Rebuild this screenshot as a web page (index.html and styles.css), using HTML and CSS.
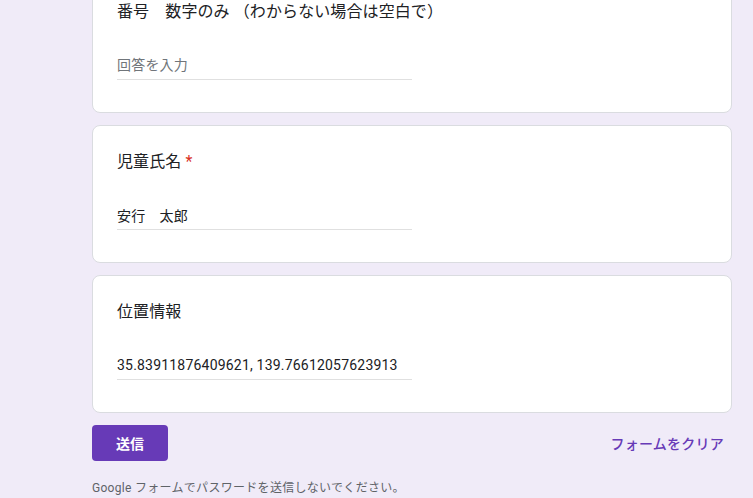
FILE: index.html
```html
<!DOCTYPE html>
<html lang="ja">
<head>
    <meta charset="UTF-8">
    <meta name="viewport" content="width=device-width, initial-scale=1.0">
    <title>フォーム</title>
    <link rel="stylesheet" href="styles.css">
</head>
<body>
    <div class="container">
        <form id="mainForm">
            <div class="card">
                <div class="question-title">番号　数字のみ （わからない場合は空白で）</div>
                <div class="answer">
                    <input type="text" name="number" placeholder="回答を入力">
                </div>
            </div>
            <div class="card">
                <div class="question-title">児童氏名 <span class="required">*</span></div>
                <div class="answer">
                    <input type="text" name="name" value="安行　太郎">
                </div>
            </div>
            <div class="card">
                <div class="question-title">位置情報</div>
                <div class="answer">
                    <input type="text" name="location" value="35.83911876409621, 139.76612057623913">
                </div>
            </div>
            <div class="actions">
                <button type="submit" class="submit-btn">送信</button>
                <button type="reset" class="clear-btn">フォームをクリア</button>
            </div>
        </form>
        <p class="notice">Google フォームでパスワードを送信しないでください。</p>
    </div>
</body>
</html>
```

FILE: styles.css
```css
html, body {
    margin: 0;
    padding: 0;
}
body {
    background-color: #f0ebf8;
    font-family: Roboto, "Noto Sans CJK JP", sans-serif;
    color: #202124;
}
.container {
    width: 640px;
    margin: -25px 0 0 92px;
}
.card {
    background-color: #fff;
    border: 1px solid #dadce0;
    border-radius: 8px;
    padding: 24px 24px 32px;
    margin-bottom: 12px;
}
.question-title {
    font-size: 16px;
    line-height: 24px;
    letter-spacing: 0.1px;
}
.required {
    color: #d93025;
}
.answer {
    margin-top: 24px;
    width: 50%;
}
.answer input {
    display: block;
    width: 100%;
    box-sizing: border-box;
    height: 32px;
    padding: 7px 0 4px;
    border: none;
    border-bottom: 1px solid #e0e0e0;
    font-family: Roboto, "Noto Sans CJK JP", sans-serif;
    font-size: 14px;
    line-height: 20px;
    letter-spacing: 0.2px;
    color: #202124;
    background: transparent;
    outline: none;
}
.answer input::placeholder {
    color: #70757a;
}
.actions {
    display: flex;
    justify-content: space-between;
    align-items: center;
    margin-top: 1px;
}
.submit-btn {
    width: 76px;
    height: 36px;
    background-color: #673ab7;
    color: #fff;
    border: none;
    border-radius: 4px;
    font-family: Roboto, "Noto Sans CJK JP", sans-serif;
    font-size: 14px;
    font-weight: 700;
    cursor: pointer;
}
.clear-btn {
    height: 36px;
    padding: 0 8px;
    background: none;
    border: none;
    color: #673ab7;
    font-family: Roboto, "Noto Sans CJK JP", sans-serif;
    font-size: 14px;
    font-weight: 500;
    letter-spacing: 0.25px;
    cursor: pointer;
}
.notice {
    margin: 19px 0 0;
    font-size: 12px;
    line-height: 16px;
    letter-spacing: 0.3px;
    color: #5f6368;
}
```
